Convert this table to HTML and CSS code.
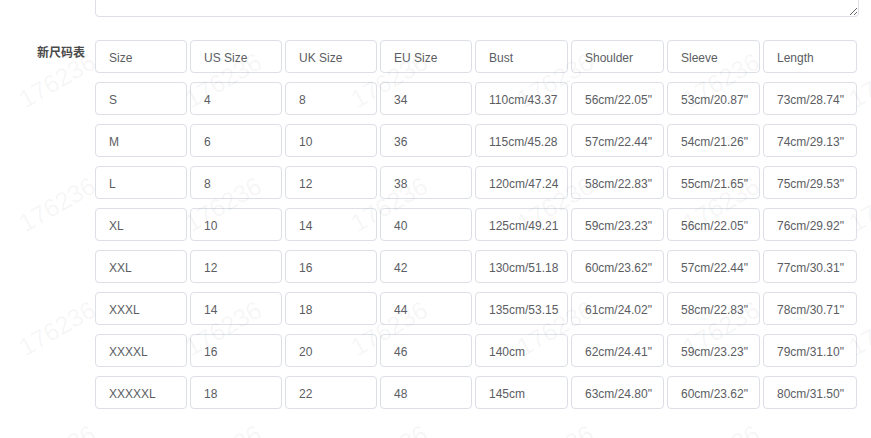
FILE: index.html
```html
<!DOCTYPE html>
<html lang="zh">
<head>
<meta charset="utf-8">
<title>新尺码表</title>
<link rel="stylesheet" href="styles.css">
</head>
<body>
<div class="page">
  <div class="form-row">
    <div class="form-label"></div>
    <div class="textarea-wrap">
      <textarea class="textarea"></textarea>
      <span class="counter">0/500</span>
    </div>
  </div>

  <div class="form-row size-row">
    <div class="form-label size-label">新尺码表</div>
    <div class="size-grid">
      <div class="cell">Size</div><div class="cell">US Size</div><div class="cell">UK Size</div><div class="cell">EU Size</div><div class="cell">Bust</div><div class="cell">Shoulder</div><div class="cell">Sleeve</div><div class="cell">Length</div>
      <div class="cell">S</div><div class="cell">4</div><div class="cell">8</div><div class="cell">34</div><div class="cell">110cm/43.37</div><div class="cell">56cm/22.05"</div><div class="cell">53cm/20.87"</div><div class="cell">73cm/28.74"</div>
      <div class="cell">M</div><div class="cell">6</div><div class="cell">10</div><div class="cell">36</div><div class="cell">115cm/45.28</div><div class="cell">57cm/22.44"</div><div class="cell">54cm/21.26"</div><div class="cell">74cm/29.13"</div>
      <div class="cell">L</div><div class="cell">8</div><div class="cell">12</div><div class="cell">38</div><div class="cell">120cm/47.24</div><div class="cell">58cm/22.83"</div><div class="cell">55cm/21.65"</div><div class="cell">75cm/29.53"</div>
      <div class="cell">XL</div><div class="cell">10</div><div class="cell">14</div><div class="cell">40</div><div class="cell">125cm/49.21</div><div class="cell">59cm/23.23"</div><div class="cell">56cm/22.05"</div><div class="cell">76cm/29.92"</div>
      <div class="cell">XXL</div><div class="cell">12</div><div class="cell">16</div><div class="cell">42</div><div class="cell">130cm/51.18</div><div class="cell">60cm/23.62"</div><div class="cell">57cm/22.44"</div><div class="cell">77cm/30.31"</div>
      <div class="cell">XXXL</div><div class="cell">14</div><div class="cell">18</div><div class="cell">44</div><div class="cell">135cm/53.15</div><div class="cell">61cm/24.02"</div><div class="cell">58cm/22.83"</div><div class="cell">78cm/30.71"</div>
      <div class="cell">XXXXL</div><div class="cell">16</div><div class="cell">20</div><div class="cell">46</div><div class="cell">140cm</div><div class="cell">62cm/24.41"</div><div class="cell">59cm/23.23"</div><div class="cell">79cm/31.10"</div>
      <div class="cell">XXXXXL</div><div class="cell">18</div><div class="cell">22</div><div class="cell">48</div><div class="cell">145cm</div><div class="cell">63cm/24.80"</div><div class="cell">60cm/23.62"</div><div class="cell">80cm/31.50"</div>
    </div>
  </div>
</div>

<div class="watermark-layer" aria-hidden="true">
  <div class="watermark">
    <span>176236</span><span>176236</span><span>176236</span><span>176236</span><span>176236</span><span>176236</span>
    <span>176236</span><span>176236</span><span>176236</span><span>176236</span><span>176236</span><span>176236</span>
    <span>176236</span><span>176236</span><span>176236</span><span>176236</span><span>176236</span><span>176236</span>
    <span>176236</span><span>176236</span><span>176236</span><span>176236</span><span>176236</span><span>176236</span>
  </div>
</div>
</body>
</html>
```

FILE: styles.css
```css
html, body {
  margin: 0;
  padding: 0;
  background: #ffffff;
  overflow: hidden;
}

body {
  font-family: "Liberation Sans", Arial, "Noto Sans CJK SC", sans-serif;
  font-size: 12px;
  color: #606266;
  position: relative;
  width: 871px;
  height: 438px;
}

.page {
  display: flex;
  flex-direction: column;
  gap: 23px;
}

.form-row {
  display: flex;
  align-items: flex-start;
}

.form-label {
  width: 95px;
  flex: 0 0 95px;
  box-sizing: border-box;
  padding-right: 10px;
  text-align: right;
}

.size-label {
  line-height: 24px;
  font-family: "Noto Sans CJK SC", "Liberation Sans", sans-serif;
  font-weight: 700;
  font-size: 12px;
  color: #4a4a4a;
}

.textarea-wrap {
  position: relative;
  width: 764px;
  margin-top: -43px;
}

.textarea {
  display: block;
  width: 100%;
  height: 60px;
  box-sizing: border-box;
  border: 1px solid #dcdfe6;
  border-radius: 4px;
  background: #fff;
  resize: both;
  margin: 0;
  font: inherit;
}

.counter {
  position: absolute;
  right: 8px;
  bottom: 14px;
  font-size: 12px;
  line-height: 14px;
  color: #909399;
}

.size-grid {
  display: grid;
  grid-template-columns: 92px 92px 92px 92px 93px 93px 93px 94px;
  column-gap: 3px;
  row-gap: 9px;
  width: 762px;
}

.cell {
  height: 33px;
  box-sizing: border-box;
  border: 1px solid #dcdfe6;
  border-radius: 4px;
  background: #fff;
  padding: 2px 4px 0 13px;
  display: flex;
  align-items: center;
  white-space: nowrap;
  overflow: hidden;
  color: #5b5d63;
}

.watermark-layer {
  position: absolute;
  left: 0;
  top: 0;
  width: 871px;
  height: 438px;
  overflow: hidden;
  pointer-events: none;
}

.watermark {
  margin: 18px 0 0 -26px;
  display: grid;
  grid-template-columns: repeat(6, 166px);
  grid-auto-rows: 124px;
}

.watermark span {
  display: flex;
  align-items: center;
  justify-content: center;
  font-family: "Liberation Sans", Arial, sans-serif;
  font-size: 25px;
  color: rgba(120, 120, 130, 0.07);
  transform: rotate(-30deg);
}
```
